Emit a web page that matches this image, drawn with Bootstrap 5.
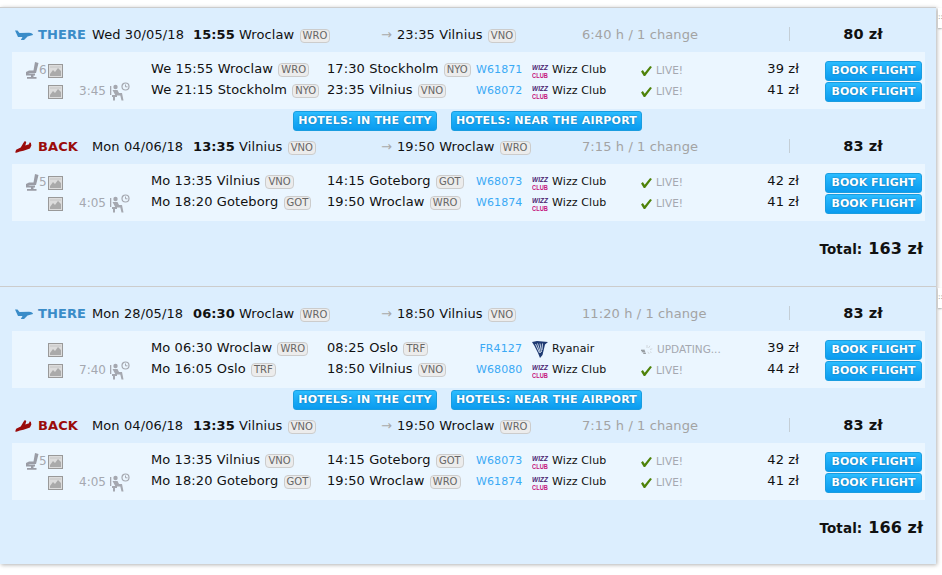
<!DOCTYPE html>
<html lang="en">
<head>
    <meta charset="UTF-8">
    <meta name="viewport" content="width=device-width, initial-scale=1.0">
    <title>Flights</title>
    <link rel="stylesheet" href="https://cdn.jsdelivr.net/npm/bootstrap@5.3.0/dist/css/bootstrap.min.css">
    <style>
        body { background: #fff; font-family: "DejaVu Sans", Verdana, sans-serif; font-size: 13px; letter-spacing: .1px; color: #111; overflow: hidden; }
        .page-wrap { padding-top: 7px; position: relative; height: 575px; }
        .results-panel { width: 936px; background: #dceefe; border-top: 1px solid #ccc; box-shadow: 1px 1px 4px rgba(0,0,0,.3); }
        .trip { padding: 16px 0 26px; border-bottom: 1px solid #ccc; }
        .trip:last-child { padding-bottom: 25px; border-bottom: 0; }
        .head-row { display: grid; grid-template-columns: 23px 54px 101px 46px 142px 16px 185px 207px 147px; grid-template-rows: 20px; height: 20px; align-items: center; padding-left: 15px; white-space: nowrap; }
        .head-row > span { line-height: 18px; padding-top: 2px; }
        .dir-there { color: #3a8cc8; font-weight: 700; }
        .dir-back { color: #9a0b0b; font-weight: 700; }
        .head-row > .head-price { font-weight: 700; font-size: 14.5px; text-align: center; border-left: 1px solid #c4ced6; height: 14px; line-height: 14px; padding-top: 0; }
        .dur { color: #a3a3a3; }
        .arrow-gray { color: #aaa; }
        .apt-code { display: inline-block; font-size: 10px; line-height: 12px; padding: 0 2px; margin-left: 1px; color: #666; background: #ececec; border: 1px solid #ccc; border-radius: 4px; letter-spacing: 0; }
        .legs { margin: 8px 11px 0 12px; padding: 8px 0 7px; background: #ebf6ff; }
        .leg-row { display: grid; grid-template-columns: 13px 9px 15px 16px 31px 41px 176px 149px 56px 20px 89px 126px 32px 26px 97px; grid-template-rows: 21px; height: 21px; align-items: center; padding-left: 14px; white-space: nowrap; }
        .leg-main { line-height: 17px; padding-bottom: 4px; }
        .leg-gray { color: #a5a8b0; font-size: 12px; letter-spacing: 0; padding-bottom: 1px; }
        .flight-no { color: #3aa9f5; text-align: right; padding-right: 10px; font-size: 11px; }
        .airline { font-size: 11px; }
        .status { color: #a5a8b0; font-size: 10.500px; letter-spacing: 0; display: flex; align-items: center; gap: 4px; }
        .leg-price { text-align: right; line-height: 17px; padding-bottom: 4px; }
        .btn-book { --bs-btn-padding-x: 0; --bs-btn-padding-y: 0; --bs-btn-font-size: 11px; --bs-btn-font-weight: 700; --bs-btn-line-height: 18px; --bs-btn-border-radius: 3px; --bs-btn-color: #fff; --bs-btn-border-color: #1a9de0; width: 97px; height: 20px; white-space: nowrap; background: linear-gradient(#2bbcff, #0a9bef); text-shadow: 0 0 2px rgba(0,60,110,.6); letter-spacing: 0; }
        .hotel-row { margin-top: 2px; height: 20px; padding-left: 293px; gap: 14px; }
        .btn-hotel { width: 144px; letter-spacing: .2px; }
        .btn-hotel-wide { width: 191px; letter-spacing: .2px; }
        .back-row { margin-top: 5px; }
        .total-row { margin-top: 15px; height: 24px; padding-top: 2px; padding-right: 13px; font-weight: 700; font-size: 13.500px; }
        .total-num { font-size: 16px; margin-left: 1px; }
        .side-tab { position: absolute; left: 938px; width: 4px; height: 20px; background: #fff; box-shadow: 0 1px 2px rgba(0,0,0,.3); font-size: 7px; line-height: 19px; color: #666; overflow: hidden; }
    </style>
</head>
<body>
    <svg width="0" height="0" class="position-absolute">
        <symbol id="plane" viewBox="0 0 18 10"><path d="M0 .5H2.500L4.500 3 14 2.800Q18 3.300 18 5L12.500 6.500 9 10H5.800L7.500 7H3Z"/></symbol>
        <symbol id="planeback" viewBox="0 0 18 13"><path d="M0 12.500 1 9.500 6 7 9 2 10.500 0 12 1 11 5 15 3.500 15.500 1.500 17 2 17.500 5 16 8 9 10.500 5 11.500Q2 13 0 12.500Z"/></symbol>
        <symbol id="seat" viewBox="0 0 13 17"><path d="M9 0 12.500 1 10 11H4L2 11.500H9V13.500H7.500V15H10.500V16.800H1V15H5V13.500H0V10L3 8.500H7.500Z"/></symbol>
        <symbol id="pic" viewBox="0 0 15 14"><rect x=".5" y=".5" width="14" height="13" fill="#dcdcdc" stroke="#999"/><path d="M2 10 5 6 7 8 10 4 13 7V12H2Z" fill="#aaa"/><path d="M2 3H13" stroke="#c4c4c4"/></symbol>
        <symbol id="waiter" viewBox="0 0 20 19"><g fill="#a5a8b0"><circle cx="5.500" cy="5" r="2.200"/><path d="M0 4H1.300V13H0ZM2.500 8H7.500L9 11H12L13.500 18.500H11.500L10.300 13.500H5.500Z"/><path d="M2 13H7V15H5V18.500H3V15H2Z"/></g><circle cx="15.500" cy="4.500" r="3.500" fill="none" stroke="#a5a8b0" stroke-width="1.200"/><path d="M15.500 2.500V4.800H17.500" fill="none" stroke="#a5a8b0"/></symbol>
        <symbol id="check" viewBox="0 0 12 11"><path d="M0 6 2 4.500 4 7.500 10 0 12 1 4.500 11H3Z" fill="#4e8209"/></symbol>
        <symbol id="harp" viewBox="0 0 16 17"><path d="M0 1 5 0 16 1 13 3.500 10.500 14 8 17 6 12 2.500 5Z" fill="#1f3a72"/><path d="M3.500 3 7.500 12M5.500 2.500 8.500 12M8 2.500 9.500 11M10.500 2.500 10 9" stroke="#ebf6ff" stroke-width=".8"/></symbol>
        <symbol id="spin" viewBox="0 0 16 12"><path d="M0 7H5M1 9H5.500M3 11H6.500" stroke="#333" stroke-width=".8"/><path d="M8 4V0M10 4 12 1M12 6 15 5M12 9 14 10M9 9 11 12" stroke="#c8ccd0" stroke-width="1"/></symbol>
    </svg>

    <div class="page-wrap">
        <div class="side-tab" style="top: 8px">::</div>
        <div class="side-tab" style="top: 288px">::</div>
        <div class="results-panel" id="results"></div>
    </div>

    <script src="https://cdn.jsdelivr.net/npm/bootstrap@5.3.0/dist/js/bootstrap.bundle.min.js"></script>
    <script>
        const icon = (id, w, h, extra = "") => `<svg width="${w}" height="${h}" ${extra}><use href="#${id}"/></svg>`;
        const code = c => `<span class="apt-code">${c}</span>`;

        const wizz = `<svg width="20" height="16" viewBox="0 0 20 16"><text x="0" y="7" font-size="8" font-weight="700" font-style="italic" font-family="Liberation Sans" fill="#4a1c70" textLength="16" lengthAdjust="spacingAndGlyphs">WIZZ</text><text x="0" y="15" font-size="7" font-weight="700" font-family="Liberation Sans" fill="#c5147d" textLength="16" lengthAdjust="spacingAndGlyphs">CLUB</text></svg>`;

        const there1 = {
            dir: "THERE", date: "Wed 30/05/18", time: "15:55", from: "Wroclaw", fromCode: "WRO",
            arr: "23:35", to: "Vilnius", toCode: "VNO", dur: "6:40 h / 1 change", price: "80 zł", seats: 6, layover: "3:45",
            legs: [
                ["We 15:55 Wroclaw", "WRO", "17:30 Stockholm", "NYO", "W61871", "wizz", "live", "39 zł"],
                ["We 21:15 Stockholm", "NYO", "23:35 Vilnius", "VNO", "W68072", "wizz", "live", "41 zł"]
            ]
        };
        const there2 = {
            dir: "THERE", date: "Mon 28/05/18", time: "06:30", from: "Wroclaw", fromCode: "WRO",
            arr: "18:50", to: "Vilnius", toCode: "VNO", dur: "11:20 h / 1 change", price: "83 zł", seats: 0, layover: "7:40",
            legs: [
                ["Mo 06:30 Wroclaw", "WRO", "08:25 Oslo", "TRF", "FR4127", "ryanair", "updating", "39 zł"],
                ["Mo 16:05 Oslo", "TRF", "18:50 Vilnius", "VNO", "W68080", "wizz", "live", "44 zł"]
            ]
        };
        const back = {
            dir: "BACK", date: "Mon 04/06/18", time: "13:35", from: "Vilnius", fromCode: "VNO",
            arr: "19:50", to: "Wroclaw", toCode: "WRO", dur: "7:15 h / 1 change", price: "83 zł", seats: 5, layover: "4:05",
            legs: [
                ["Mo 13:35 Vilnius", "VNO", "14:15 Goteborg", "GOT", "W68073", "wizz", "live", "42 zł"],
                ["Mo 18:20 Goteborg", "GOT", "19:50 Wroclaw", "WRO", "W61874", "wizz", "live", "41 zł"]
            ]
        };

        function legRow(leg, i, d) {
            const [dep, depCode, arr, arrCode, flight, carrier, status, price] = leg;
            const seat = i === 0 && d.seats ? icon("seat", 13, 17, 'fill="#9a9ca5"') : "";
            const seats = i === 0 && d.seats ? d.seats : "";
            const lay = i === 1 ? d.layover : "";
            const wait = i === 1 ? icon("waiter", 20, 19) : "";
            const logo = carrier === "wizz" ? wizz : icon("harp", 16, 17);
            const name = carrier === "wizz" ? "Wizz Club" : "Ryanair";
            const st = status === "live"
                ? `${icon("check", 11, 10)}<span>LIVE!</span>`
                : `${icon("spin", 12, 9)}<span>UPDATING...</span>`;
            return `<div class="leg-row">
                <span class="d-flex">${seat}</span>
                <span class="leg-gray">${seats}</span>
                <span class="d-flex">${icon("pic", 15, 14)}</span>
                <span></span>
                <span class="leg-gray">${lay}</span>
                <span class="d-flex">${wait}</span>
                <span class="leg-main">${dep} ${code(depCode)}</span>
                <span class="leg-main">${arr} ${code(arrCode)}</span>
                <span class="flight-no">${flight}</span>
                <span class="d-flex">${logo}</span>
                <span class="airline">${name}</span>
                <span class="status">${st}</span>
                <span class="leg-price">${price}</span>
                <span></span>
                <button class="btn btn-book">BOOK FLIGHT</button>
            </div>`;
        }

        function direction(d) {
            const isThere = d.dir === "THERE";
            const ic = isThere ? icon("plane", 18, 10, 'fill="#3a8cc8"') : icon("planeback", 17, 12, 'fill="#9a0b0b"');
            return `<div class="head-row ${isThere ? "" : "back-row"}">
                <span class="d-flex align-items-center">${ic}</span>
                <span class="${isThere ? "dir-there" : "dir-back"}">${d.dir}</span>
                <span>${d.date}</span>
                <span class="fw-bold">${d.time}</span>
                <span>${d.from} ${code(d.fromCode)}</span>
                <span class="arrow-gray">→</span>
                <span>${d.arr} ${d.to} ${code(d.toCode)}</span>
                <span class="dur">${d.dur}</span>
                <span class="head-price">${d.price}</span>
            </div>
            <div class="legs">${d.legs.map((l, i) => legRow(l, i, d)).join("")}</div>`;
        }

        function trip(out, ret, total) {
            return `<div class="trip">
                ${direction(out)}
                <div class="hotel-row d-flex">
                    <button class="btn btn-book btn-hotel">HOTELS: IN THE CITY</button>
                    <button class="btn btn-book btn-hotel-wide">HOTELS: NEAR THE AIRPORT</button>
                </div>
                ${direction(ret)}
                <div class="total-row d-flex justify-content-end align-items-center">Total:&nbsp;<span class="total-num">${total} zł</span></div>
            </div>`;
        }

        document.getElementById("results").innerHTML = trip(there1, back, 163) + trip(there2, back, 166);
    </script>
</body>
</html>
